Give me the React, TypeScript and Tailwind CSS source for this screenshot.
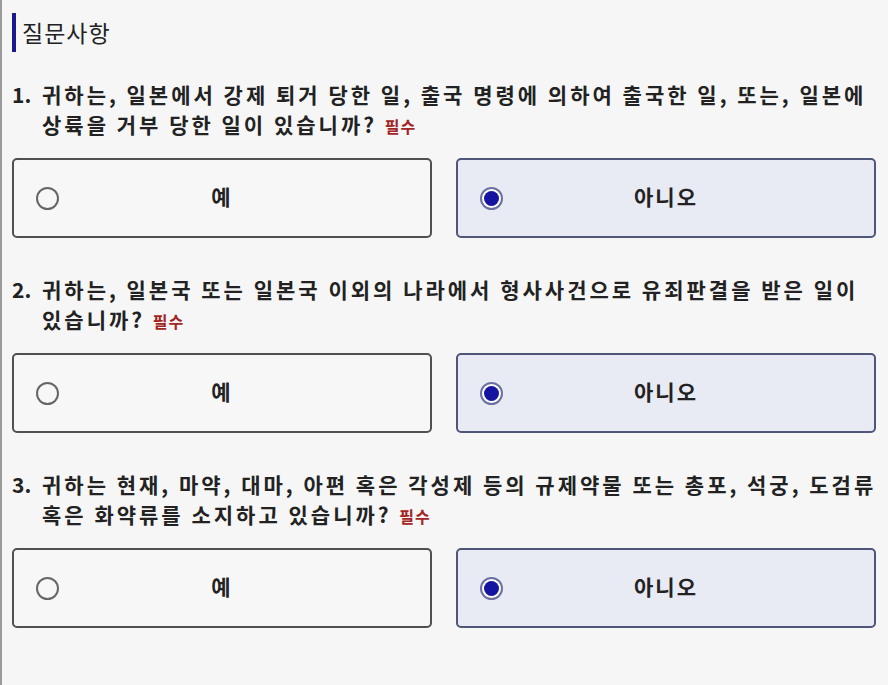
const questions = [
	{
		no: '1.',
		lines: [
			'귀하는, 일본에서 강제 퇴거 당한 일, 출국 명령에 의하여 출국한 일, 또는, 일본에',
			'상륙을 거부 당한 일이 있습니까?',
		],
	},
	{
		no: '2.',
		lines: ['귀하는, 일본국 또는 일본국 이외의 나라에서 형사사건으로 유죄판결을 받은 일이', '있습니까?'],
	},
	{
		no: '3.',
		lines: [
			'귀하는 현재, 마약, 대마, 아편 혹은 각성제 등의 규제약물 또는 총포, 석궁, 도검류',
			'혹은 화약류를 소지하고 있습니까?',
		],
	},
]

function Radio({ checked }: { checked: boolean }) {
	if (checked) {
		return (
			<span className='flex h-[23px] w-[23px] items-center justify-center rounded-full border-2 border-[#6b70a0] bg-white'>
				<span className='h-[15px] w-[15px] rounded-full bg-[#1414a0]' />
			</span>
		)
	}
	return <span className='h-[23px] w-[23px] rounded-full border-2 border-[#666] bg-[#f7f7f7]' />
}

function Option({ label, checked }: { label: string; checked: boolean }) {
	return (
		<div
			className={`relative flex h-[80px] items-center rounded-[5px] border-2 px-[22px] ${
				checked ? 'border-[#50567a] bg-[#e8ebf3]' : 'border-[#505050] bg-[#f7f7f7]'
			}`}
		>
			<Radio checked={checked} />
			<span className='absolute inset-0 flex items-center justify-center pb-[3px] text-[21px] font-bold tracking-[2px] text-[#222]'>
				{label}
			</span>
		</div>
	)
}

export default function App() {
	return (
		<div
			className='min-h-screen border-l-2 border-[#9a9a9a] bg-[#f6f6f6] pb-8 pl-[10px] pr-[12px] text-[#222]'
			style={{ fontFamily: '"Noto Sans CJK KR", "Noto Sans", sans-serif' }}
		>
			{/* Section title */}
			<div className='flex items-center gap-[6px] pt-[13px]'>
				<span className='h-[39px] w-[4px] bg-[#1a1a8c]' />
				<h2 className='text-[23px] leading-[39px] tracking-[1px] text-[#222]'>질문사항</h2>
			</div>

			<div className='mt-[27px] flex flex-col gap-[36px]'>
				{questions.map(q => (
					<section key={q.no}>
						<div className='flex whitespace-nowrap text-[21px] font-bold leading-[30px] tracking-[3px]'>
							<span className='w-[30px] shrink-0 tracking-normal'>{q.no}</span>
							<div>
								<div className='h-[30px]'>{q.lines[0]}</div>
								<div className='h-[30px]'>
									{q.lines[1]}{' '}
									<span className='text-[16px] leading-none tracking-[1px] text-[#a32424]'>필수</span>
								</div>
							</div>
						</div>
						<div className='mt-[19px] grid grid-cols-2 gap-6'>
							<Option label='예' checked={false} />
							<Option label='아니오' checked={true} />
						</div>
					</section>
				))}
			</div>
		</div>
	)
}
